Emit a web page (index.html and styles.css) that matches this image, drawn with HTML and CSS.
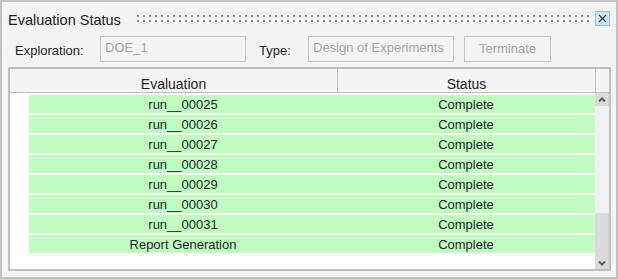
FILE: index.html
```html
<!DOCTYPE html>
<html lang="en">
<head>
    <meta charset="UTF-8">
    <meta name="viewport" content="width=device-width, initial-scale=1.0">
    <title>Evaluation Status</title>
    <link rel="stylesheet" href="styles.css">
</head>
<body>

    <div class="panel">
        <div class="title-row">
            <div class="title">Evaluation Status</div>
            <div class="grip"></div>
            <div class="close-btn">
                <svg width="9" height="9" viewBox="0 0 9 9">
                    <path d="M1 1 L8 8 M8 1 L1 8" stroke="#3a3a3a" stroke-width="1.2" fill="none"/>
                </svg>
            </div>
        </div>

        <div class="form-row">
            <span class="label explore-label">Exploration:</span>
            <div class="field">DOE_1</div>
            <span class="label type-label">Type:</span>
            <div class="field">Design of Experiments</div>
            <div class="button">Terminate</div>
        </div>

        <div class="table">
            <div class="table-head">
                <div class="head-cell eval-head">Evaluation</div>
                <div class="head-cell status-head">Status</div>
            </div>
            <div class="table-body">
                <div class="rows">
                    <div class="row"><span>run__00025</span><span>Complete</span></div>
                    <div class="row"><span>run__00026</span><span>Complete</span></div>
                    <div class="row"><span>run__00027</span><span>Complete</span></div>
                    <div class="row"><span>run__00028</span><span>Complete</span></div>
                    <div class="row"><span>run__00029</span><span>Complete</span></div>
                    <div class="row"><span>run__00030</span><span>Complete</span></div>
                    <div class="row"><span>run__00031</span><span>Complete</span></div>
                    <div class="row"><span>Report Generation</span><span>Complete</span></div>
                </div>
                <div class="scrollbar">
                    <div class="scroll-btn">
                        <svg width="8" height="5" viewBox="0 0 8 5">
                            <path d="M1 4.5 L4 1.5 L7 4.5" stroke="#5c5c5c" stroke-width="2" fill="none"/>
                        </svg>
                    </div>
                    <div class="scroll-track"></div>
                    <div class="scroll-thumb"></div>
                    <div class="scroll-btn down">
                        <svg width="8" height="5" viewBox="0 0 8 5">
                            <path d="M1 0.5 L4 3.5 L7 0.5" stroke="#5c5c5c" stroke-width="2" fill="none"/>
                        </svg>
                    </div>
                </div>
            </div>
        </div>
    </div>

</body>
</html>
```

FILE: styles.css
```css
body {
    margin: 0;
    padding: 0;
    font-family: "Liberation Sans", Arial, sans-serif;
    color: #1e1e1e;
    background-color: #f4f4f4;
}
.panel {
    width: 618px;
    height: 279px;
    box-sizing: border-box;
    border: 2px solid #c2c2c2;
    background-color: #f4f4f4;
    padding: 0 5px 6px 6px;
    display: flex;
    flex-direction: column;
}

/* title bar */
.title-row {
    display: flex;
    align-items: flex-start;
    margin-top: 9px;
    height: 18px;
}
.title {
    width: 129px;
    font-size: 14.5px;
    line-height: 18px;
    color: #202020;
}
.grip {
    flex: 1;
    height: 7px;
    margin-top: 4px;
    margin-right: 2px;
    background-image: conic-gradient(at 2px 2px, transparent 75%, #8c8c8c 0);
    background-size: 6px 5px;
}
.close-btn {
    width: 15px;
    height: 15px;
    box-sizing: border-box;
    margin-right: 1px;
    border: 1px solid #8fc4e6;
    background-color: #cce8fa;
    display: flex;
    align-items: center;
    justify-content: center;
}

/* exploration row */
.form-row {
    display: flex;
    align-items: center;
    margin-top: 7px;
    height: 26px;
    font-size: 13px;
}
.label {
    padding-top: 3px;
    color: #1e1e1e;
}
.explore-label {
    width: 92px;
    padding-left: 7px;
    box-sizing: border-box;
}
.type-label {
    width: 49px;
    margin-left: 13px;
}
.field {
    width: 146px;
    height: 26px;
    box-sizing: border-box;
    border: 1px solid #c6c6c6;
    padding-left: 4px;
    line-height: 22px;
    color: #a4a4a4;
}
.button {
    width: 87px;
    height: 26px;
    box-sizing: border-box;
    margin-left: 10px;
    border: 1px solid #c6c6c6;
    line-height: 24px;
    text-align: center;
    color: #a4a4a4;
}

/* table */
.table {
    margin-top: 5px;
    height: 204px;
    box-sizing: border-box;
    border: 2px solid #bfbfbf;
    display: flex;
    flex-direction: column;
}
.table-head {
    display: flex;
    height: 24px;
    box-sizing: border-box;
    border-bottom: 1px solid #bdbdbd;
    background-color: #f4f4f4;
}
.head-cell {
    box-sizing: border-box;
    border-right: 1px solid #c4c4c4;
    padding-top: 7px;
    font-size: 14px;
    line-height: 16px;
    text-align: center;
    color: #1e1e1e;
}
.eval-head {
    width: 328px;
}
.status-head {
    width: 258px;
}
.table-body {
    flex: 1;
    display: flex;
    background-color: white;
}
.rows {
    flex: 1;
    padding: 2px 0 0 19px;
}
.row {
    display: grid;
    grid-template-columns: 308px 1fr;
    height: 18px;
    margin-bottom: 2px;
    background-color: #c1fdc1;
    font-size: 13px;
    line-height: 19px;
    text-align: center;
    color: #1e1e2a;
}

/* scrollbar */
.scrollbar {
    width: 14px;
    display: flex;
    flex-direction: column;
    background-color: #f0f0f0;
}
.scroll-btn {
    height: 13px;
    background-color: #dadada;
    display: flex;
    align-items: center;
    justify-content: center;
}
.scroll-btn.down {
    align-items: flex-end;
    padding-bottom: 3px;
    height: 10px;
}
.scroll-track {
    flex: 1;
}
.scroll-thumb {
    height: 43px;
    background-color: #dadada;
}
```
